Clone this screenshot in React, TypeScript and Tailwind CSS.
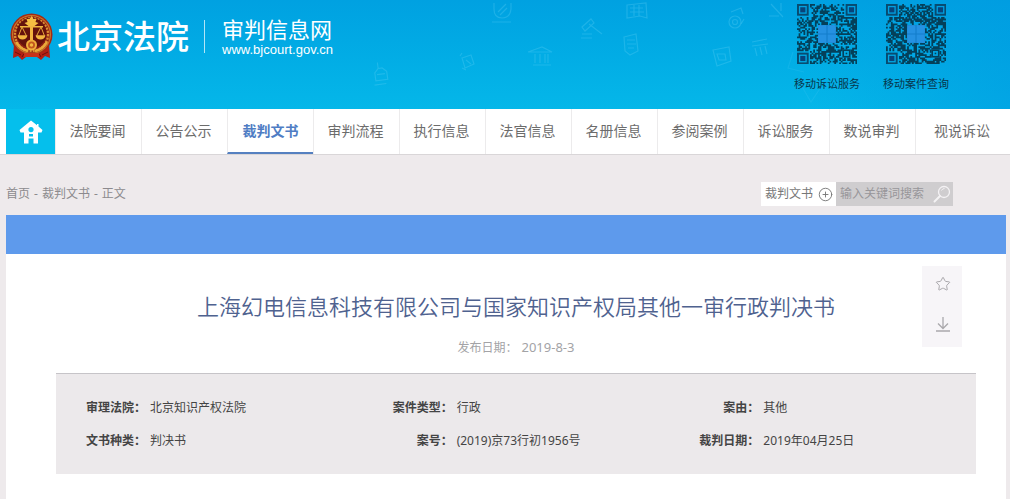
import { CirclePlus, Star } from 'lucide-react';

const navItems = [
  '法院要闻',
  '公告公示',
  '裁判文书',
  '审判流程',
  '执行信息',
  '法官信息',
  '名册信息',
  '参阅案例',
  '诉讼服务',
  '数说审判',
  '视说诉讼',
];

const caseInfo = [
  { label: '审理法院', value: '北京知识产权法院' },
  { label: '案件类型', value: '行政' },
  { label: '案由', value: '其他' },
  { label: '文书种类', value: '判决书' },
  { label: '案号', value: '(2019)京73行初1956号' },
  { label: '裁判日期', value: '2019年04月25日' },
];

const QR_SIZE = 37;

// true when the cell belongs to one of the three corner squares or their quiet zone
const inFinder = (x: number, y: number) =>
  (x < 8 && y < 8) || (x >= QR_SIZE - 8 && y < 8) || (x < 8 && y >= QR_SIZE - 8);

const qrPath = (seed: number) => {
  let state = seed;
  let d = '';
  for (let y = 0; y < QR_SIZE; y++) {
    for (let x = 0; x < QR_SIZE; x++) {
      state = (state * 48271) % 2147483647;
      if (inFinder(x, y)) continue;
      if (x > 27 && x < 33 && y > 27 && y < 33) continue;
      if (state / 2147483647 < 0.58) d += `M${x} ${y}h1.1v1.1h-1.1z`;
    }
  }
  return d;
};

const QrCode = ({ seed }: { seed: number }) => (
  <svg viewBox="0 0 37 37" className="size-[60px]" aria-hidden="true">
    <path d={qrPath(seed)} fill="#04405a" />
    {[[0, 0], [30, 0], [0, 30]].map(([x, y]) => (
      <g key={`${x}-${y}`}>
        <rect x={x + 0.6} y={y + 0.6} width="6" height="6" fill="none" stroke="#084b70" strokeWidth="1.2" />
        <rect x={x + 2} y={y + 2} width="3.2" height="3.2" fill="#08437a" />
      </g>
    ))}
    <rect x="28.5" y="28.5" width="4" height="4" fill="none" stroke="#04405a" />
    <rect x="30" y="30" width="1" height="1" fill="#04405a" />
    <rect x="13" y="13" width="11" height="11" fill="#2591e2" />
    <path d="M18.5 13v11M13 18.5h11" stroke="#147ecb" strokeWidth=".7" />
  </svg>
);

const Emblem = () => (
  <svg viewBox="0 0 43 47" className="h-[47px] w-[43px]" aria-hidden="true">
    <path d="M4 31l-1 14 5-2 4 4 4-3h11l4 3 4-4 5 2-1-14z" fill="#b51f13" />
    <path d="M5 39l6 3M38 39l-6 3M12 44l3-5M31 44l-3-5" stroke="#6f100b" strokeWidth="1" />
    <circle cx="21.5" cy="21.5" r="21" fill="#a42a13" />
    <circle cx="21.5" cy="21.5" r="19.5" fill="#c9772a" />
    <circle cx="21.5" cy="21.5" r="18.3" fill="#8d1f12" />
    <circle cx="21.5" cy="21.5" r="16.5" fill="none" stroke="#d98f33" strokeWidth="2.4" strokeDasharray="2 1.2" />
    <circle cx="21.5" cy="20" r="15" fill="#65120c" />
    <path d="M20 8h3v22h-3zM10 13h23v1.6H10z" fill="#f2b53f" />
    <path d="M21.5 3l2 3 3 0-1 3 3 1-4 3h-6l-4-3 3-1-1-3 3 0z" fill="#f6bd42" />
    <path d="M12 14l-3.5 9h8zM31 14l-4.5 9h8z" fill="none" stroke="#eaa83a" strokeWidth="1" />
    <path d="M7.5 22.5h10q-1 4-5 4t-5-4zM25.5 22.5h10q-1 4-5 4t-5-4z" fill="#f2b53f" />
    <path d="M6 29q5 8 12 9M37 29q-5 8-12 9" fill="none" stroke="#eaa83a" strokeWidth="2.5" />
    <circle cx="21.5" cy="32" r="5.5" fill="#f0ae3b" />
    <circle cx="21.5" cy="32" r="3.5" fill="#c2571e" />
    <circle cx="21.5" cy="32" r="1.7" fill="#f3b944" />
    <path d="M14 40h15v4H14z" fill="#c8321a" />
  </svg>
);

// faint line drawings scattered over the banner
const BannerPattern = () => (
  <svg
    viewBox="0 0 450 109"
    className="absolute top-0 left-[370px] h-[109px] w-[450px]"
    fill="none"
    stroke="#5fd0f5"
    strokeOpacity=".3"
    strokeWidth="1.2"
    aria-hidden="true"
  >
    <g transform="rotate(-8 12 74)">
      <path d="M9 62v6h4l4 4v8H5v-8l4-4M7 74h8M3 84h12" />
    </g>
    <path d="M124 3v6q0 9 8 9t9-9V3M128 12l8-8M130 15l7-7M122 22h19" />
    <path d="M92 58l9-3 3 9-9 4zM90 56l2-3M96 60l5 4M92 68l4 2" />
    <path d="M158 52l14-5 10 5zM165 54v9M170 54v9M175 54v9M178 54v9M163 65h18" />
    <path d="M212 27l9-8 3 4-9 8zM219 24l13 10M212 34h10M211 38h11" />
    <path d="M257 5l19-2 1 15-7-2-13 2zM260 8h13M260 12h14M264 5v11M269 5v11" />
    <path d="M254 37l12-3 2 17-8 4-5-4zM257 40h8M257 44h9M258 48h6" />
    <circle cx="365" cy="22" r="6" />
    <circle cx="365" cy="22" r="2.5" />
    <path d="M361 12l10-4 2 6M371 24l3-5" />
    <path d="M401 4l12 13M399 16h10M411 3v8" />
    <path d="M382 42l15-3M382 46l16-2M385 48l2 8M390 47l2 8M395 46l2 8" />
    <path d="M343 50l16-3 2 14-14 5zM347 54h8l1 6h-7z" />
    <path d="M423 52l-5 16 16 4M427 78l14 24 12-18" strokeOpacity=".15" />
  </svg>
);

const HomeIcon = () => (
  <svg viewBox="0 0 24 24" className="size-6" aria-hidden="true">
    <path
      fill="#fff"
      fillRule="evenodd"
      d="M12 .5l6 4.700V4h1.500v2.500L23.500 10l-1 2.500H19v11h-4.500v-5h-5v5H5v-11H1.500L.5 10zM12 7a2.600 2.600 0 100 5.200A2.600 2.600 0 0012 7zM10 14v2.500h4V14z"
    />
  </svg>
);

export default function App() {
  return (
    <div className="flex min-h-screen flex-col bg-[#eeeaec] font-['Noto_Sans','Noto_Sans_CJK_SC',sans-serif] text-xs text-[#444]">
      <header className="relative flex h-[109px] items-start justify-between overflow-hidden bg-linear-to-b from-[#00a1e1] to-[#05b7e9] pr-[61px] pl-[10px]">
        <div className="absolute inset-0 bg-linear-to-r from-transparent from-80% to-[#009be1]/60" />
        <BannerPattern />
        <a href="#" className="relative flex pt-[13px] text-white">
          <Emblem />
          <span className="ml-1 text-[33px] leading-[47px] font-medium">北京法院</span>
          <span className="mt-[7px] ml-[15px] h-[33px] w-px bg-white/70" />
          <span className="ml-[17px] flex flex-col pt-0.5">
            <span className="text-[22px] leading-[28px]">审判信息网</span>
            <span className="font-['Liberation_Sans',sans-serif] text-[13px] leading-[14px]">www.bjcourt.gov.cn</span>
          </span>
        </a>
        <div className="relative flex gap-[23px] pt-1 text-[11px] text-[#08364c]">
          <div className="flex flex-col items-center gap-3">
            <QrCode seed={20191} />
            <span className="leading-4">移动诉讼服务</span>
          </div>
          <div className="flex flex-col items-center gap-3">
            <QrCode seed={7751} />
            <span className="leading-4">移动案件查询</span>
          </div>
        </div>
      </header>

      <nav className="flex h-[46px] border-b border-[#d9d6d8] bg-white pl-1.5 text-sm text-[#6c6c6c]">
        <a href="#" aria-label="首页" className="flex w-[49px] items-center justify-center bg-[#05bfec]">
          <HomeIcon />
        </a>
        {navItems.map((item) => (
          <a
            key={item}
            href="#"
            className={
              item === '裁判文书'
                ? 'flex w-[86px] items-center justify-center border-b-2 border-l border-b-[#5580c0] border-l-[#ecebec] font-bold text-[#4f7dc4]'
                : 'flex w-[86px] items-center justify-center border-l border-[#ecebec] pr-0.5 pb-0.5 last:w-auto last:flex-1'
            }
          >
            {item}
          </a>
        ))}
      </nav>

      <div className="flex items-center justify-between pt-[27px] pr-[57px] pb-[9px] pl-1.5 text-[#8c8a8e]">
        <div className="flex gap-1">
          <a href="#">首页</a>-<a href="#">裁判文书</a>-<span>正文</span>
        </div>
        <form className="flex h-6">
          <label className="relative flex w-[75px] items-center bg-white text-[#777]">
            <select aria-label="搜索范围" className="w-full appearance-none pl-1 outline-none">
              <option>裁判文书</option>
            </select>
            <CirclePlus size={15} strokeWidth={1.5} className="pointer-events-none absolute right-[3px]" />
          </label>
          <div className="flex w-[117px] items-center bg-[#cfcdcf]">
            <input
              aria-label="搜索"
              placeholder="输入关键词搜索"
              className="min-w-0 flex-1 pl-1 outline-none placeholder:text-[#98969a]"
            />
            <button type="button" aria-label="搜索" className="mr-0.5">
              <svg viewBox="0 0 18 18" className="size-[18px]" fill="none" stroke="#f4f2f4" aria-hidden="true">
                <circle cx="11" cy="7" r="5.5" strokeWidth="1.3" />
                <path d="M8.500 5.500q1-2 3-2" strokeWidth="1" />
                <path d="M7 11l-5.500 5.500" strokeWidth="2" strokeLinecap="round" />
              </svg>
            </button>
          </div>
        </form>
      </div>

      <main className="mr-1 ml-1.5 flex-1 bg-white">
        <div className="h-[39px] bg-[#5e9aec]" />
        <article className="relative pr-[30px] pb-6 pl-[50px]">
          <div className="absolute top-3 right-[44px] flex h-[81px] w-10 flex-col items-center bg-[#f7f5f8] pl-0.5 text-[#aaa8ac]">
            <button type="button" aria-label="收藏" className="flex h-9 items-center">
              <Star size={16} strokeWidth={1.5} />
            </button>
            <button type="button" aria-label="下载" className="flex h-[45px] items-center">
              <svg viewBox="0 0 14 15" className="h-[15px] w-[14px]" fill="none" stroke="currentColor" strokeWidth="1.3" aria-hidden="true">
                <path d="M7 0v11M2 6.500l5 5 5-5M0 14h14" />
              </svg>
            </button>
          </div>
          <h1 className="pt-9 text-center text-[22px] leading-[32px] font-[350] text-[#4f628f]">
            上海幻电信息科技有限公司与国家知识产权局其他一审行政判决书
          </h1>
          <p className="flex items-baseline justify-center gap-1 pt-[15px] leading-5 text-[#a3a3a6]">
            发布日期：
            <time dateTime="2019-08-03" className="text-[13px]">2019-8-3</time>
          </p>
          <dl className="mt-[15px] grid grid-cols-3 border-t border-[#c6c4c8] bg-[#ece9eb] py-[17px] leading-[33px]">
            {caseInfo.map(({ label, value }) => (
              <div key={label} className="flex gap-1">
                <dt className="w-[90px] text-right font-bold">{label}：</dt>
                <dd>{value}</dd>
              </div>
            ))}
          </dl>
        </article>
      </main>
    </div>
  );
}
